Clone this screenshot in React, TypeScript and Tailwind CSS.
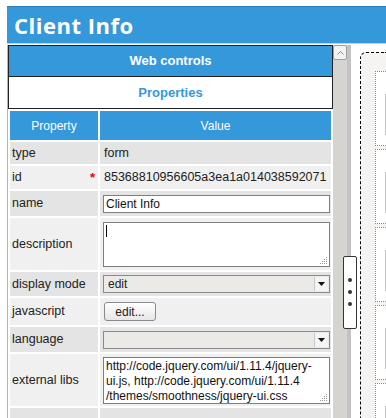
import React from 'react';

type Row = {
  label: string;
  h: string;
  required?: boolean;
  kind: 'text' | 'input' | 'textarea' | 'select' | 'button' | 'empty';
  value?: string[];
};

const rows: Row[] = [
  { label: 'type', h: 'h-[22px]', kind: 'text', value: ['form'] },
  { label: 'id', h: 'h-[23px]', kind: 'text', required: true, value: ['85368810956605a3ea1a014038592071'] },
  { label: 'name', h: 'h-[25px]', kind: 'input', value: ['Client Info'] },
  { label: 'description', h: 'h-[52px]', kind: 'textarea', value: [] },
  { label: 'display mode', h: 'h-[24px]', kind: 'select', value: ['edit'] },
  { label: 'javascript', h: 'h-[27px]', kind: 'button', value: ['edit...'] },
  { label: 'language', h: 'h-[25px]', kind: 'select', value: [''] },
  {
    label: 'external libs',
    h: 'h-[52px]',
    kind: 'textarea',
    value: [
      'http://code.jquery.com/ui/1.11.4/jquery-',
      'ui.js, http://code.jquery.com/ui/1.11.4',
      '/themes/smoothness/jquery-ui.css',
    ],
  },
  { label: '', h: 'h-[30px]', kind: 'empty' },
];

function Grip() {
  return (
    <svg className="absolute right-[1px] bottom-[1px]" width="10" height="10" viewBox="0 0 10 10">
      {[
        [8, 2],
        [6, 4], [8, 4],
        [4, 6], [6, 6], [8, 6],
        [2, 8], [4, 8], [6, 8], [8, 8],
      ].map(([x, y], i) => (
        <rect key={i} x={x} y={y} width="1" height="1" fill="#9a9a9a" />
      ))}
    </svg>
  );
}

function SelectBox({ value }: { value: string }) {
  return (
    <div className="relative h-[18px] w-[227px] bg-[#ebeae7] border border-[#8a8a8a] flex items-center pl-[4px] text-[12px] text-[#222]">
      {value}
      <div className="absolute right-[1px] top-[1px] bottom-[1px] w-[14px] bg-[#f4f4f4] border-l border-[#c8c8c8] flex items-center justify-center">
        <svg width="7" height="4" viewBox="0 0 7 4">
          <path d="M0 0 H7 L3.5 4 Z" fill="#111" />
        </svg>
      </div>
    </div>
  );
}

function Value({ row }: { row: Row }) {
  const v = row.value ?? [];
  switch (row.kind) {
    case 'text':
      return <span className="pl-[4px] text-[12.5px] text-[#222]">{v[0]}</span>;
    case 'input':
      return (
        <div className="h-[18px] w-[227px] ml-[3px] bg-white border border-[#7f7f7f] flex items-center pl-[2px] text-[12px] text-[#111]">
          {v[0]}
        </div>
      );
    case 'textarea':
      return (
        <div
          className={`relative ml-[3px] w-[227px] bg-white border border-[#7f7f7f] px-[2px] pt-[1px] text-[12px] leading-[15px] text-[#111] whitespace-nowrap overflow-hidden ${
            v.length ? 'h-[47px]' : 'h-[45px]'
          }`}
        >
          {v.length ? v.map((line, i) => <div key={i}>{line}</div>) : <div className="mt-[1px] w-[1px] h-[12px] bg-black" />}
          <Grip />
        </div>
      );
    case 'select':
      return (
        <div className="ml-[3px]">
          <SelectBox value={v[0] ?? ''} />
        </div>
      );
    case 'button':
      return (
        <div className="ml-[4px] h-[19px] w-[52px] rounded-[3px] border border-[#8a8a8a] bg-gradient-to-b from-white to-[#e6e6e6] flex items-center justify-center text-[12px] text-[#222]">
          {v[0]}
        </div>
      );
    default:
      return null;
  }
}

export default function App() {
  return (
    <div className="w-[386px] h-[418px] overflow-hidden bg-white relative font-['Liberation_Sans',Arial,sans-serif]">
      <div className="pt-[6px] pl-[7px]">
        {/* Title bar */}
        <div className="h-[38px] bg-[#3498db] border-t border-[#2a7fc0] border-b border-b-[#cfcfcf] flex items-center pl-[7px]">
          <span className="font-['Open_Sans',sans-serif] font-bold text-[22px] tracking-[0.5px] text-white leading-none">
            Client Info
          </span>
        </div>

        <div className="mt-[1px] flex h-[373px]">
          {/* Left panel */}
          <div className="w-[326px] shrink-0 border-l border-[#b4b4b4] flex flex-col">
            <div className="h-[32px] shrink-0 bg-[#3498db] border border-[#222] flex items-center justify-center text-white font-bold text-[13px]">
              Web controls
            </div>
            <div className="h-[32px] shrink-0 bg-white border-x border-b border-[#222] flex items-center justify-center text-[#3498db] font-bold text-[13px]">
              Properties
            </div>

            <div className="flex flex-col gap-[2px] p-[2px] shrink-0">
              <div className="flex gap-[2px] h-[29px] shrink-0 text-white text-[12px]">
                <div className="w-[88px] bg-[#3498db] flex items-center justify-center">Property</div>
                <div className="w-[231px] bg-[#3498db] flex items-center justify-center">Value</div>
              </div>
              {rows.map((row, i) => {
                const bg = i % 2 === 0 ? 'bg-[#e4e4e4]' : 'bg-[#f0f0f0]';
                return (
                  <div key={i} className={`flex gap-[2px] shrink-0 ${row.h}`}>
                    <div className={`w-[88px] ${bg} flex items-center justify-between pl-[2px] pr-[3px] text-[12.5px] text-[#222]`}>
                      <span>{row.label}</span>
                      {row.required && <span className="text-[#e00] text-[13px] font-bold">*</span>}
                    </div>
                    <div className={`w-[231px] ${bg} flex items-center`}>
                      <Value row={row} />
                    </div>
                  </div>
                );
              })}
            </div>
          </div>

          {/* Scrollbar */}
          <div className="w-[14px] shrink-0 bg-[#d5d4d1] flex flex-col">
            <div className="h-[15px] bg-[#f2f2f2] border border-[#9e9e9e] rounded-[2px] flex items-center justify-center">
              <svg width="7" height="4" viewBox="0 0 7 4">
                <path d="M0.5 3.5 L3.5 0.5 L6.5 3.5" fill="none" stroke="#8a8a8a" strokeWidth="1" />
              </svg>
            </div>
          </div>
          <div className="w-[4px] shrink-0 bg-[#c3c3c3]" />
          <div className="w-[9px] shrink-0 bg-white" />

          {/* Canvas */}
          <div className="flex-1 pt-[7px]">
            <div className="h-full bg-[#f5f4f2] border-l border-t border-dashed border-black rounded-tl-[6px] pl-[14px] pt-[18px] flex flex-col gap-[3px] overflow-hidden">
              {[0, 1, 2, 3, 4].map((i) => (
                <div key={i} className="h-[75px] bg-white border-l border-t border-b border-dotted border-[#888] shrink-0 pl-[9px] pt-[22px] pb-[10px] flex">
                  <div className="flex-1 bg-[#f7f7f7] border-l border-t border-[#c4c4c4]" />
                </div>
              ))}
            </div>
          </div>
        </div>
      </div>

      {/* Splitter handle */}
      <div className="absolute left-[343px] top-[256px] w-[14px] h-[73px] bg-white border border-[#333] rounded-[2px] flex flex-col items-center pt-[21px] gap-[8px]">
        <span className="w-[4px] h-[4px] rounded-full bg-[#333]" />
        <span className="w-[4px] h-[4px] rounded-full bg-[#333]" />
        <span className="w-[4px] h-[4px] rounded-full bg-[#333]" />
      </div>
    </div>
  );
}
